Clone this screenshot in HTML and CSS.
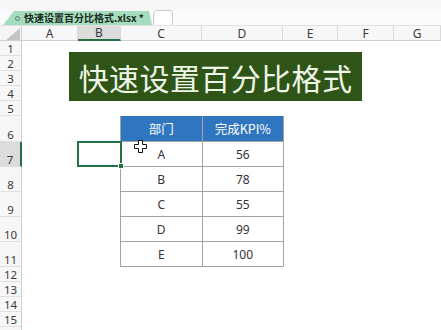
FILE: index.html
```html
<!DOCTYPE html>
<html lang="zh">
<head>
<meta charset="utf-8">
<title>快速设置百分比格式.xlsx</title>
<link rel="stylesheet" href="styles.css">
</head>
<body>
<div class="app">
  <div class="topbar">
    <div class="tabs">
      <div class="tab active"><span class="tab-dot"></span><span class="tab-name">快速设置百分比格式.xlsx *</span></div>
      <svg class="newtab" width="22" height="15" viewBox="0 0 22 15"><path d="M0.5 15 V5 Q0.5 0.5 5 0.5 H17 Q19.5 0.5 19.5 3 V15" fill="#fff" stroke="#c9c9c9" stroke-width="1"/></svg>
    </div>
  </div>
  <div class="sheet">
    <div class="corner"><svg width="22" height="15" viewBox="0 0 22 15"><path d="M20 2 V14 H6 Z" fill="#c4c4c4"/></svg></div>
    <div class="colhead">A</div>
    <div class="colhead sel">B</div>
    <div class="colhead">C</div>
    <div class="colhead">D</div>
    <div class="colhead">E</div>
    <div class="colhead">F</div>
    <div class="colhead">G</div>

    <div class="rowhead">1</div>
    <div class="rowhead">2</div>
    <div class="rowhead">3</div>
    <div class="rowhead">4</div>
    <div class="rowhead">5</div>
    <div class="rowhead">6</div>
    <div class="rowhead sel">7</div>
    <div class="rowhead">8</div>
    <div class="rowhead">9</div>
    <div class="rowhead">10</div>
    <div class="rowhead">11</div>
    <div class="rowhead">12</div>
    <div class="rowhead">13</div>
    <div class="rowhead">14</div>
    <div class="rowhead">15</div>
    <div class="rowhead"></div>

    <div class="title">快速设置百分比格式</div>

    <div class="kpi">
      <div class="kh">部门</div>
      <div class="kh">完成KPI%</div>
      <div class="kc">A</div><div class="kc">56</div>
      <div class="kc">B</div><div class="kc">78</div>
      <div class="kc">C</div><div class="kc">55</div>
      <div class="kc">D</div><div class="kc">99</div>
      <div class="kc">E</div><div class="kc">100</div>
    </div>

    <div class="selcell"></div>
  </div>
  <svg class="cursor" width="13" height="13" viewBox="0 0 13 13"><path d="M4.5 0.5 H8.5 V4.5 H12.5 V8.5 H8.5 V12.5 H4.5 V8.5 H0.5 V4.5 H4.5 Z" fill="#fff" stroke="#111" stroke-width="1"/></svg>
</div>
</body>
</html>
```

FILE: styles.css
```css
html, body {
  margin: 0;
  padding: 0;
  background: #ffffff;
  overflow: hidden;
}

.app {
  position: relative;
  width: 441px;
  height: 330px;
  overflow: hidden;
  font-family: "Noto Sans", "Noto Sans CJK SC", sans-serif;
}

.topbar {
  height: 26px;
  box-sizing: border-box;
  background: linear-gradient(#f7f7f7 0, #f7f7f7 11px, #fbfbfb 11px);
  border-bottom: 1px solid #e2e2e2;
  display: flex;
  align-items: flex-end;
}

.tabs {
  display: flex;
  align-items: flex-end;
  height: 15px;
  padding-left: 3px;
}

.tab {
  height: 14px;
  display: flex;
  align-items: center;
  gap: 4px;
  padding: 0 4px 0 12px;
  width: 149px;
  box-sizing: border-box;
  background: #a4dcbe;
  clip-path: polygon(0 100%, 11px 0, calc(100% - 3px) 0, 100% 100%);
}

.tab-dot {
  width: 3px;
  height: 3px;
  border: 1px solid #5f7a6a;
  border-radius: 50%;
  flex: none;
}

.tab-name {
  font-family: "Noto Sans CJK SC", sans-serif;
  font-size: 10px;
  font-weight: 700;
  color: #1d2a22;
  white-space: nowrap;
  line-height: 14px;
}

.newtab {
  display: block;
  margin-left: 1px;
}

.sheet {
  display: grid;
  grid-template-columns: 22px 56px 43px 81px 81px 55px 56px 47px;
  grid-template-rows: 15px repeat(5, 15px) 26px repeat(5, 25px) repeat(5, 15px);
}

.corner {
  grid-row: 1;
  grid-column: 1;
  background: #f5f5f5;
  border-right: 1px solid #d0d0d0;
  border-bottom: 1px solid #d0d0d0;
  box-sizing: border-box;
  overflow: hidden;
}

.corner svg {
  display: block;
}

.colhead {
  grid-row: 1;
  background: #f7f7f7;
  border-right: 1px solid #dadada;
  border-bottom: 1px solid #d0d0d0;
  box-sizing: border-box;
  font-size: 12px;
  color: #3a3a3a;
  display: flex;
  align-items: center;
  justify-content: center;
  line-height: 13px;
}

.colhead.sel {
  background: #dcdcdc;
  border-bottom: 2px solid #217346;
}

.rowhead {
  grid-column: 1;
  background: #f7f7f7;
  border-right: 1px solid #cfcfcf;
  border-bottom: 1px solid #e0e0e0;
  box-sizing: border-box;
  font-size: 11.5px;
  color: #3a3a3a;
  display: flex;
  align-items: flex-end;
  justify-content: center;
  line-height: 13px;
  overflow: hidden;
}

.rowhead.sel {
  background: #dcdcdc;
  border-right: 2px solid #217346;
}

.title {
  grid-column: 2 / 8;
  grid-row: 2 / 7;
  align-self: start;
  justify-self: start;
  margin: 11px 0 0 47px;
  width: 293px;
  height: 49px;
  background: #2f5417;
  color: #eef5e6;
  font-family: "Noto Sans CJK SC", sans-serif;
  font-size: 30px;
  letter-spacing: 0.4px;
  display: flex;
  align-items: center;
  justify-content: center;
  line-height: 1;
}

.kpi {
  grid-column: 4 / 6;
  grid-row: 7 / 13;
  display: grid;
  grid-template-columns: 1fr 1fr;
  grid-template-rows: 25px repeat(5, 1fr);
  gap: 1px;
  background: #a3a3a3;
  border: 1px solid #a3a3a3;
  border-top: 0;
  margin-left: -1px;
  margin-right: -1px;
}

.kh {
  background: #2f75c0;
  color: #ffffff;
  font-family: "Noto Sans CJK SC", sans-serif;
  font-size: 12.5px;
  display: flex;
  align-items: center;
  justify-content: center;
}

.kc {
  background: #ffffff;
  color: #333333;
  font-family: "Noto Sans", "Noto Sans CJK SC", sans-serif;
  font-size: 12px;
  display: flex;
  align-items: center;
  justify-content: center;
}

.selcell {
  grid-column: 3;
  grid-row: 8;
  margin: -1px -1px 0 -1px;
  border: 2px solid #217346;
  position: relative;
}

.selcell::after {
  content: "";
  position: absolute;
  right: -4px;
  bottom: -4px;
  width: 4px;
  height: 4px;
  background: #217346;
  border: 1px solid #ffffff;
}

.cursor {
  position: absolute;
  left: 134px;
  top: 140px;
}
```
